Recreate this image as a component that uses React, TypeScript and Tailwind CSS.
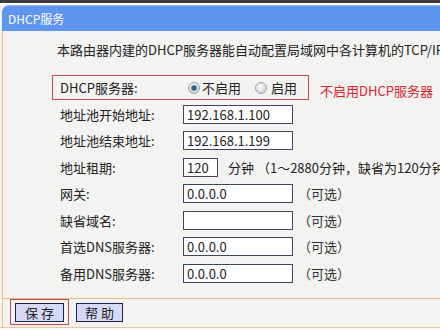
import React from "react";

function Radio({ checked }: { checked: boolean }) {
  return (
    <svg width="12" height="12" viewBox="0 0 12 12" className="shrink-0">
      <defs>
        <radialGradient id={checked ? "rg1" : "rg2"} cx="0.4" cy="0.35" r="0.7">
          <stop offset="0" stopColor="#ffffff" />
          <stop offset="1" stopColor="#c8ccd2" />
        </radialGradient>
      </defs>
      <circle cx="6" cy="6" r="5.5" fill={`url(#${checked ? "rg1" : "rg2"})`} stroke="#9aa3ad" strokeWidth="1" />
      {checked && <circle cx="6" cy="6" r="2.8" fill="#2f5f80" stroke="#7aa6c4" strokeWidth="0.8" />}
    </svg>
  );
}

function Field({ label, value, w = "w-[110px]", suffix }: { label: string; value: string; w?: string; suffix?: React.ReactNode }) {
  return (
    <div className="h-[26.5px] flex items-center pl-[57px] whitespace-nowrap">
      <div className="w-[123px] shrink-0">{label}</div>
      <div className={`${w} h-[19px] border border-[#3c4660] bg-white flex items-center pl-[3px] shrink-0`}>{value}</div>
      {suffix}
    </div>
  );
}

const opt = <span className="ml-[5px] text-[#333]">（可选）</span>;

export default function App() {
  return (
    <div
      className="w-[440px] h-[330px] overflow-hidden bg-[#f3f3f1] text-[13px] text-[#222] leading-none"
      style={{ fontFamily: '"Noto Sans CJK SC", "Noto Sans", sans-serif' }}
    >
      <div className="h-[3px] bg-[#3a3a3a]" />
      <div className="h-[2px] bg-white" />
      <div className="h-[26px] ml-[2px] rounded-tl-[7px] bg-[#5f95f2] border-t border-[#9ab8ee] flex items-center pl-[6px] text-white text-[12px]">
        DHCP服务
      </div>
      <div className="ml-[2px] border-l border-[#f0c080]">
        <div className="h-[267px] overflow-hidden">
          <div className="pt-[12px] pl-[54px] whitespace-nowrap h-[32px]">
            本路由器内建的DHCP服务器能自动配置局域网中各计算机的TCP/IP协议。
          </div>
          <div className="mt-[12px] flex items-start whitespace-nowrap">
            <div className="ml-[49px] w-[257px] h-[25px] border border-[#c84848] flex items-center">
              <div className="pl-[7px] w-[135px]">DHCP服务器:</div>
              <Radio checked />
              <span className="ml-[2px]">不启用</span>
              <span className="ml-[14px]"><Radio checked={false} /></span>
              <span className="ml-[4px]">启用</span>
            </div>
            <div className="ml-[11px] pt-[9px] text-[#e8202a]">不启用DHCP服务器</div>
          </div>
          <div className="mt-[1px]">
            <Field label="地址池开始地址:" value="192.168.1.100" />
            <Field label="地址池结束地址:" value="192.168.1.199" />
            <Field
              label="地址租期:"
              value="120"
              w="w-[35px]"
              suffix={<span className="ml-[10px]">分钟 （1～2880分钟，缺省为120分钟）</span>}
            />
            <Field label="网关:" value="0.0.0.0" suffix={opt} />
            <Field label="缺省域名:" value="" suffix={opt} />
            <Field label="首选DNS服务器:" value="0.0.0.0" suffix={opt} />
            <Field label="备用DNS服务器:" value="0.0.0.0" suffix={opt} />
          </div>
        </div>
        <div className="h-[1px] bg-[#f0b878]" />
        <div className="h-[28px] flex items-start pl-[7px]">
          <div className="w-[59px] h-[26px] border border-[#c84848] flex items-start justify-center pt-[3px]">
            <div className="w-[49px] h-[19px] border border-[#202050] bg-[#d5d9f5] flex items-center justify-center">保 存</div>
          </div>
          <div className="ml-[7px] mt-[4px] w-[47px] h-[19px] border border-[#202050] bg-[#d5d9f5] flex items-center justify-center">帮 助</div>
        </div>
      </div>
      <div className="h-[1px] bg-[#ecc898]" />
      <div className="h-[10px] bg-[#fafaf8]" />
    </div>
  );
}
